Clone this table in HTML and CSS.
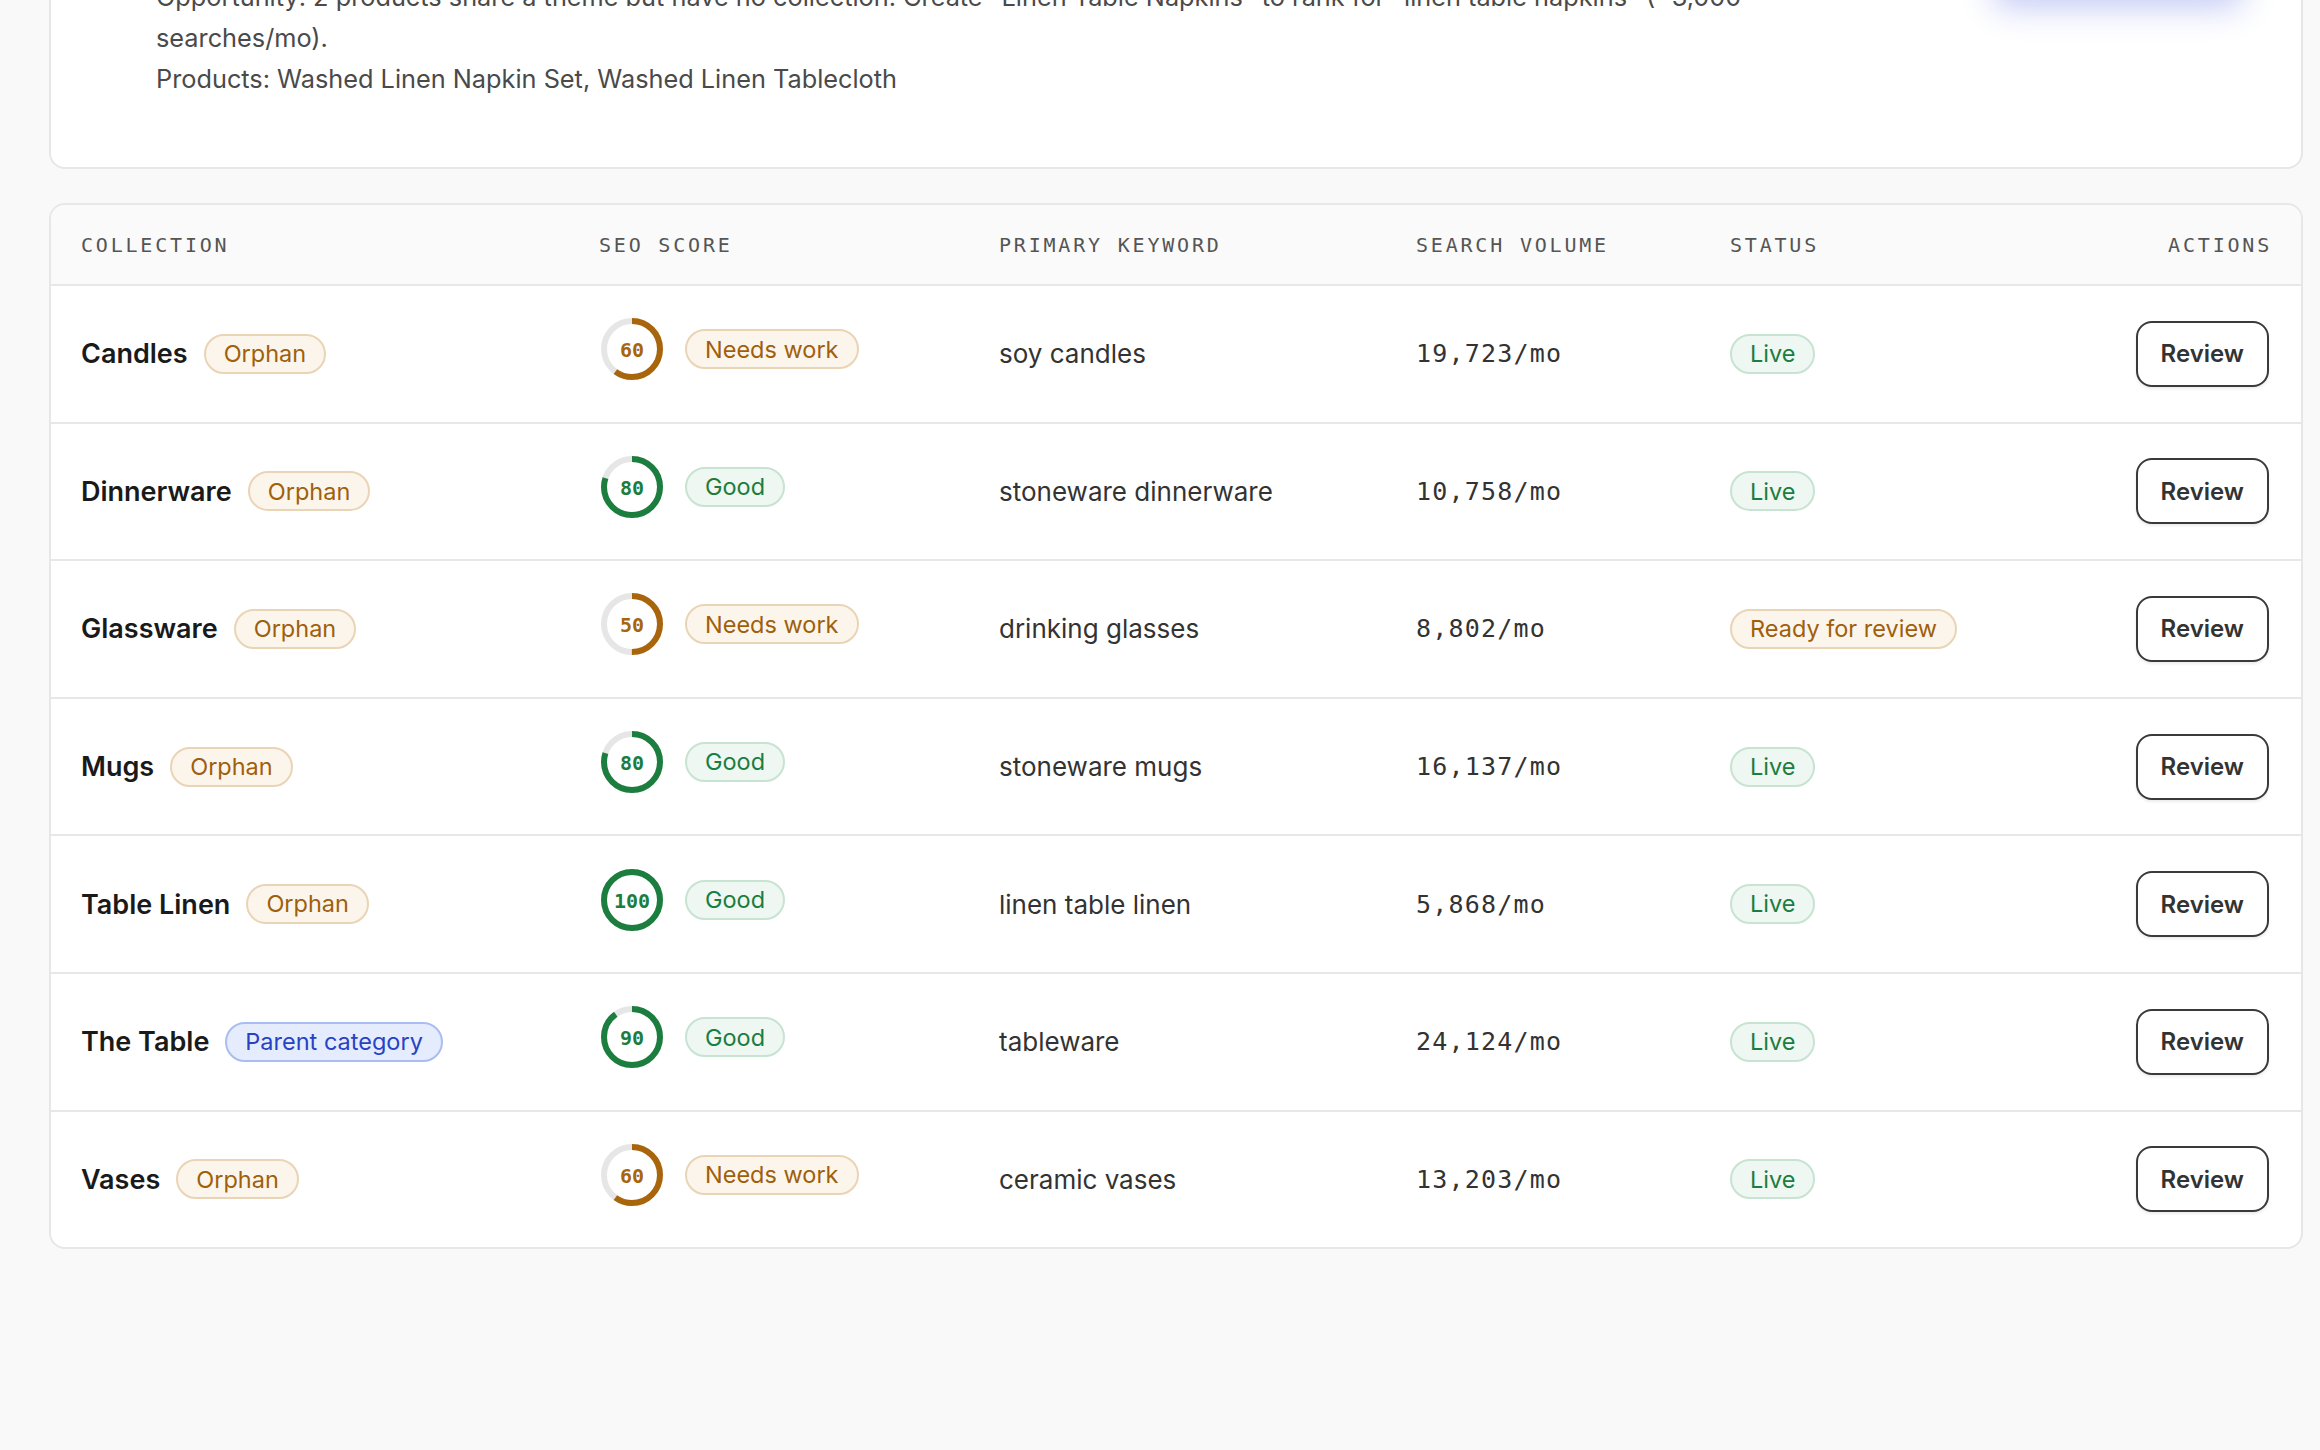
FILE: index.html
```html
<!DOCTYPE html>
<html lang="en">
<head>
<meta charset="utf-8">
<title>Collections SEO</title>
<link rel="stylesheet" href="styles.css">
</head>
<body>
<main class="page">
  <section class="card opportunity">
    <div class="opp-body">
      <h3 class="opp-title">Suggested collection: Linen Table Napkins</h3>
      <p class="opp-text">Opportunity: 2 products share a theme but have no collection. Create "Linen Table Napkins" to rank for "linen table napkins" (~3,000 searches/mo).</p>
      <p class="opp-text">Products: Washed Linen Napkin Set, Washed Linen Tablecloth</p>
    </div>
    <div class="opp-actions"><button class="btn-primary">Create collection</button></div>
  </section>

  <section class="card table-card">
    <div class="trow thead">
      <div class="th">Collection</div>
      <div class="th">SEO Score</div>
      <div class="th">Primary Keyword</div>
      <div class="th">Search Volume</div>
      <div class="th">Status</div>
      <div class="th th-right">Actions</div>
    </div>

    <div class="trow">
      <div class="cell name-cell"><span class="name">Candles</span><span class="pill pill-amber">Orphan</span></div>
      <div class="cell score-cell">
        <svg class="ring ring-amber" viewBox="0 0 62 62" width="62" height="62"><circle class="ring-track" cx="31" cy="31" r="28"/><circle class="ring-bar" cx="31" cy="31" r="28" stroke-dasharray="105.56 176" transform="rotate(-90 31 31)"/><text class="ring-num" x="31" y="32">60</text></svg>
        <span class="pill pill-amber">Needs work</span>
      </div>
      <div class="cell kw">soy candles</div>
      <div class="cell vol">19,723/mo</div>
      <div class="cell"><span class="pill pill-green">Live</span></div>
      <div class="cell actions"><button class="btn-review">Review</button></div>
    </div>

    <div class="trow">
      <div class="cell name-cell"><span class="name">Dinnerware</span><span class="pill pill-amber">Orphan</span></div>
      <div class="cell score-cell">
        <svg class="ring ring-green" viewBox="0 0 62 62" width="62" height="62"><circle class="ring-track" cx="31" cy="31" r="28"/><circle class="ring-bar" cx="31" cy="31" r="28" stroke-dasharray="140.74 176" transform="rotate(-90 31 31)"/><text class="ring-num" x="31" y="32">80</text></svg>
        <span class="pill pill-green">Good</span>
      </div>
      <div class="cell kw">stoneware dinnerware</div>
      <div class="cell vol">10,758/mo</div>
      <div class="cell"><span class="pill pill-green">Live</span></div>
      <div class="cell actions"><button class="btn-review">Review</button></div>
    </div>

    <div class="trow">
      <div class="cell name-cell"><span class="name">Glassware</span><span class="pill pill-amber">Orphan</span></div>
      <div class="cell score-cell">
        <svg class="ring ring-amber" viewBox="0 0 62 62" width="62" height="62"><circle class="ring-track" cx="31" cy="31" r="28"/><circle class="ring-bar" cx="31" cy="31" r="28" stroke-dasharray="87.96 176" transform="rotate(-90 31 31)"/><text class="ring-num" x="31" y="32">50</text></svg>
        <span class="pill pill-amber">Needs work</span>
      </div>
      <div class="cell kw">drinking glasses</div>
      <div class="cell vol">8,802/mo</div>
      <div class="cell"><span class="pill pill-amber">Ready for review</span></div>
      <div class="cell actions"><button class="btn-review">Review</button></div>
    </div>

    <div class="trow">
      <div class="cell name-cell"><span class="name">Mugs</span><span class="pill pill-amber">Orphan</span></div>
      <div class="cell score-cell">
        <svg class="ring ring-green" viewBox="0 0 62 62" width="62" height="62"><circle class="ring-track" cx="31" cy="31" r="28"/><circle class="ring-bar" cx="31" cy="31" r="28" stroke-dasharray="140.74 176" transform="rotate(-90 31 31)"/><text class="ring-num" x="31" y="32">80</text></svg>
        <span class="pill pill-green">Good</span>
      </div>
      <div class="cell kw">stoneware mugs</div>
      <div class="cell vol">16,137/mo</div>
      <div class="cell"><span class="pill pill-green">Live</span></div>
      <div class="cell actions"><button class="btn-review">Review</button></div>
    </div>

    <div class="trow">
      <div class="cell name-cell"><span class="name">Table Linen</span><span class="pill pill-amber">Orphan</span></div>
      <div class="cell score-cell">
        <svg class="ring ring-green" viewBox="0 0 62 62" width="62" height="62"><circle class="ring-track" cx="31" cy="31" r="28"/><circle class="ring-bar" cx="31" cy="31" r="28" stroke-dasharray="176 176" transform="rotate(-90 31 31)"/><text class="ring-num" x="31" y="32">100</text></svg>
        <span class="pill pill-green">Good</span>
      </div>
      <div class="cell kw">linen table linen</div>
      <div class="cell vol">5,868/mo</div>
      <div class="cell"><span class="pill pill-green">Live</span></div>
      <div class="cell actions"><button class="btn-review">Review</button></div>
    </div>

    <div class="trow">
      <div class="cell name-cell"><span class="name">The Table</span><span class="pill pill-blue">Parent category</span></div>
      <div class="cell score-cell">
        <svg class="ring ring-green" viewBox="0 0 62 62" width="62" height="62"><circle class="ring-track" cx="31" cy="31" r="28"/><circle class="ring-bar" cx="31" cy="31" r="28" stroke-dasharray="158.34 176" transform="rotate(-90 31 31)"/><text class="ring-num" x="31" y="32">90</text></svg>
        <span class="pill pill-green">Good</span>
      </div>
      <div class="cell kw">tableware</div>
      <div class="cell vol">24,124/mo</div>
      <div class="cell"><span class="pill pill-green">Live</span></div>
      <div class="cell actions"><button class="btn-review">Review</button></div>
    </div>

    <div class="trow">
      <div class="cell name-cell"><span class="name">Vases</span><span class="pill pill-amber">Orphan</span></div>
      <div class="cell score-cell">
        <svg class="ring ring-amber" viewBox="0 0 62 62" width="62" height="62"><circle class="ring-track" cx="31" cy="31" r="28"/><circle class="ring-bar" cx="31" cy="31" r="28" stroke-dasharray="105.56 176" transform="rotate(-90 31 31)"/><text class="ring-num" x="31" y="32">60</text></svg>
        <span class="pill pill-amber">Needs work</span>
      </div>
      <div class="cell kw">ceramic vases</div>
      <div class="cell vol">13,203/mo</div>
      <div class="cell"><span class="pill pill-green">Live</span></div>
      <div class="cell actions"><button class="btn-review">Review</button></div>
    </div>
  </section>
</main>
</body>
</html>
```

FILE: styles.css
```css
* { box-sizing: border-box; }

html, body {
  margin: 0;
  padding: 0;
  background: #f9f9f9;
  font-family: "Inter", "Noto Sans", "Liberation Sans", sans-serif;
  color: #1a1a1a;
  overflow: hidden;
}

.page {
  padding: 0 17px 0 49px;
}

.card {
  background: #ffffff;
  border: 2px solid #e7e7e7;
  border-radius: 16px;
}

/* Opportunity card (scrolled partially out of view) */
.opportunity {
  margin-top: -96px;
  display: flex;
  align-items: flex-start;
  justify-content: space-between;
  padding: 32px 58px 68px 105px;
}

.opp-body {
  flex: 0 0 1660px;
}

.opp-title {
  margin: 0 0 8px;
  font-size: 25px;
  line-height: 30px;
  font-weight: 600;
  color: #1a1a1a;
}

.opp-text {
  margin: 0;
  font-size: 25.3px;
  line-height: 41px;
  color: #4a4a4a;
}

.btn-primary {
  width: 250px;
  height: 56px;
  border: 0;
  border-radius: 14px;
  background: #4a5fe0;
  color: #fff;
  font-family: inherit;
  font-size: 22px;
  font-weight: 600;
  box-shadow: 0 14px 32px rgba(74, 95, 224, 0.32);
}

/* Table card */
.table-card {
  margin-top: 34px;
  overflow: hidden;
}

.trow {
  display: grid;
  grid-template-columns: 518px 400px 417px 314px 1fr auto;
  align-items: center;
  padding: 0 32px 0 30px;
  min-height: 137.6px;
  border-top: 2px solid #e7e7e7;
}

.thead {
  min-height: 79px;
  border-top: 0;
  background: #fafafa;
}

.th {
  font-family: "DejaVu Sans Mono", "Liberation Mono", monospace;
  font-size: 20px;
  letter-spacing: 2.8px;
  text-transform: uppercase;
  color: #555555;
}

.th-right {
  text-align: right;
  margin-right: -3px;
}

.cell {
  display: flex;
  align-items: center;
}

.name-cell {
  gap: 16px;
}

.name {
  font-size: 27px;
  font-weight: 600;
  color: #1a1a1a;
}

.score-cell {
  gap: 22px;
  margin-bottom: 9px;
  padding-left: 2px;
}

.ring {
  display: block;
  flex: none;
}

.ring-track {
  fill: none;
  stroke: #e6e6e6;
  stroke-width: 6;
}

.ring-bar {
  fill: none;
  stroke-width: 6;
}

.ring-num {
  font-family: "DejaVu Sans Mono", "Liberation Mono", monospace;
  font-size: 20px;
  font-weight: 700;
  text-anchor: middle;
  dominant-baseline: central;
}

.ring-amber .ring-bar { stroke: #a9650c; }
.ring-amber .ring-num { fill: #a9650c; }
.ring-green .ring-bar { stroke: #1b7d3e; }
.ring-green .ring-num { fill: #1b7d3e; }

.pill {
  display: inline-flex;
  align-items: center;
  height: 40px;
  padding: 0 18px;
  border-radius: 20px;
  border: 2px solid;
  font-size: 23.5px;
  line-height: 1;
  white-space: nowrap;
}

.pill-amber {
  background: #fcf5ec;
  border-color: #ead4b6;
  color: #9f5f0b;
}

.pill-green {
  background: #eef7f1;
  border-color: #c7e3d1;
  color: #1b7d3e;
}

.pill-blue {
  background: #e5ecfd;
  border-color: #aabdf3;
  color: #2742c4;
}

.kw {
  font-size: 26px;
  color: #333333;
}

.vol {
  font-family: "DejaVu Sans Mono", "Liberation Mono", monospace;
  font-size: 25px;
  letter-spacing: 1.2px;
  color: #333333;
}

.actions {
  justify-content: flex-end;
}

.btn-review {
  height: 66px;
  padding: 0 23px;
  border: 2px solid #3a3a3a;
  border-radius: 16px;
  background: #ffffff;
  color: #333333;
  font-family: inherit;
  font-size: 24px;
  font-weight: 600;
  box-shadow: 0 2px 3px rgba(0, 0, 0, 0.08);
}
```
